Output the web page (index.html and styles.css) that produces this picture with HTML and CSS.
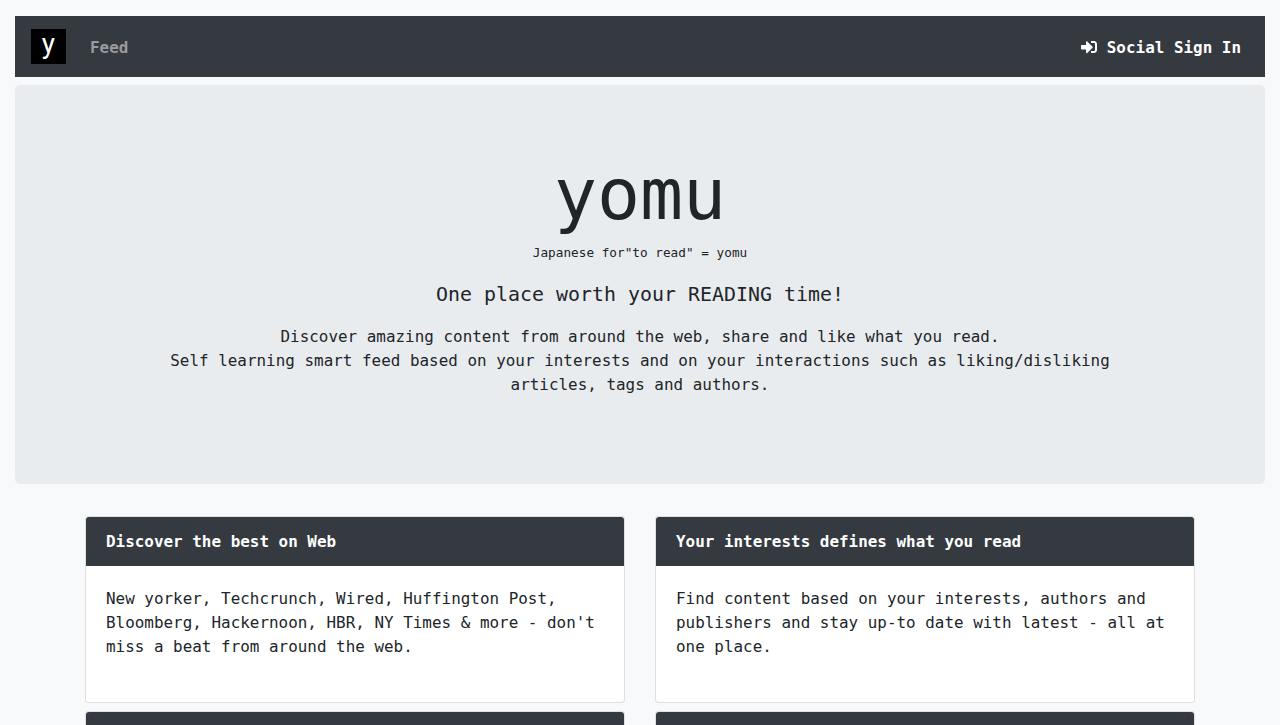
FILE: index.html
```html
<!DOCTYPE html>
<html lang="en">
<head>
  <meta charset="UTF-8" />
  <title>yomu</title>
  <link rel="stylesheet" href="styles.css">
</head>
<body>
  <nav class="navbar">
    <div class="logo">y</div>
    <a class="nav-link muted" href="#">Feed</a>
    <a class="nav-link signin" href="#">
      <svg class="icon" viewBox="0 0 512 512"><path fill="currentColor" d="M416 448h-84c-6.6 0-12-5.4-12-12v-40c0-6.6 5.4-12 12-12h84c17.7 0 32-14.3 32-32V160c0-17.7-14.3-32-32-32h-84c-6.6 0-12-5.4-12-12V76c0-6.6 5.4-12 12-12h84c53 0 96 43 96 96v192c0 53-43 96-96 96zm-47-201L201 79c-15-15-41-4.5-41 17v96H24c-13.3 0-24 10.7-24 24v96c0 13.3 10.7 24 24 24h136v96c0 21.5 26 32 41 17l168-168c9.3-9.4 9.3-24.6 0-34z"/></svg>
      <span>Social Sign In</span>
    </a>
  </nav>

  <header class="jumbotron">
    <h1>yomu</h1>
    <div class="small">Japanese for"to read" = yomu</div>
    <div class="lead">One place worth your READING time!</div>
    <p class="intro">Discover amazing content from around the web, share and like what you read.<br>Self learning smart feed based on your interests and on your interactions such as liking/disliking articles, tags and authors.</p>
  </header>

  <main class="cards">
    <div class="card">
      <div class="card-header">Discover the best on Web</div>
      <div class="card-body">New yorker, Techcrunch, Wired, Huffington Post, Bloomberg, Hackernoon, HBR, NY Times &amp; more - don't miss a beat from around the web.</div>
    </div>
    <div class="card">
      <div class="card-header">Your interests defines what you read</div>
      <div class="card-body">Find content based on your interests, authors and publishers and stay up-to date with latest - all at one place.</div>
    </div>
    <div class="card">
      <div class="card-header"></div>
    </div>
    <div class="card">
      <div class="card-header"></div>
    </div>
  </main>
</body>
</html>
```

FILE: styles.css
```css
body {
  margin: 0;
  padding: 16px 15px 0;
  background-color: #f8f9fa;
  color: #212529;
  font-family: "DejaVu Sans Mono", "Liberation Mono", monospace;
  font-size: 15.9px;
  letter-spacing: 0.02px;
  line-height: 24px;
}
.navbar {
  display: flex;
  align-items: center;
  height: 61px;
  padding: 0 16px;
  box-sizing: border-box;
  background-color: #343a40;
  margin-bottom: 8px;
}
.logo {
  width: 35px;
  height: 35px;
  background-color: #000;
  color: #fff;
  font-family: Roboto, sans-serif;
  font-size: 28px;
  line-height: 29px;
  text-align: center;
  margin-right: 16px;
}
.nav-link {
  padding: 2px 8px 0;
  color: #fff;
  font-weight: bold;
  text-decoration: none;
}
.muted {
  color: rgba(255, 255, 255, 0.5);
}
.signin {
  margin-left: auto;
  display: flex;
  align-items: center;
}
.icon {
  width: 16px;
  height: 16px;
  margin: 0 10px 2px 0;
}
.jumbotron {
  background-color: #e9ecef;
  border-radius: 5px;
  height: 399px;
  box-sizing: border-box;
  padding: 67px 32px 0;
  margin-bottom: 32px;
  text-align: center;
}
h1 {
  margin: 0 0 5px;
  font-size: 71.5px;
  font-weight: normal;
  line-height: 86px;
  letter-spacing: 0;
}
.small {
  font-size: 12.7px;
  line-height: 19px;
  margin-bottom: 18px;
}
.lead {
  font-size: 19.9px;
  line-height: 30px;
  margin-bottom: 15px;
}
.intro {
  max-width: 988px;
  margin: 0 auto;
}
.cards {
  display: grid;
  grid-template-columns: 540px 540px;
  justify-content: center;
  gap: 8px 30px;
}
.card {
  background-color: #fff;
  border: 1px solid rgba(0, 0, 0, 0.125);
  border-radius: 4px;
  overflow: hidden;
}
.card-header {
  background-color: #343a40;
  color: #fff;
  font-weight: bold;
  height: 49px;
  padding: 13px 20px 0;
  box-sizing: border-box;
}
.card-body {
  padding: 21px 20px 0;
  height: 136px;
  box-sizing: border-box;
}
```
